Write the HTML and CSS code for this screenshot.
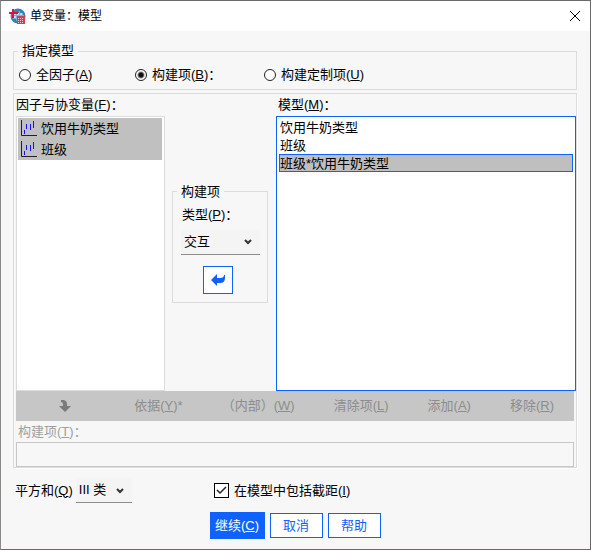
FILE: index.html
```html
<!DOCTYPE html>
<html lang="zh-CN">
  <head>
    <meta charset="utf-8">
    <title>单变量：模型</title>
    <link rel="stylesheet" href="styles.css">
  </head>
  <body>
    <div class="dialog">
      <header class="titlebar">
        <svg class="logo" width="17" height="17" viewBox="0 0 17 17">
          <circle cx="9" cy="8" r="7.500" fill="#3b7fb8"/>
          <path d="M5 5h9v6H4z" fill="#c5dcec"/>
          <path d="M4 7.500h11M4 10.500h11M7.500 4v9M10.500 3v11M13.500 5v5" stroke="#7fb0d3" fill="none"/>
          <path d="M3 1h2v3h4v2H5v4H3V6H0V4h3z" fill="#d8173a"/>
          <path d="M8 8h8v8H8z" fill="#d23c55"/>
          <path d="M9 10.500h6M9 12.500h6M9 14.500h6" stroke="#f6c9d0" stroke-dasharray="1 1"/>
        </svg>
        <h1>单变量：模型</h1>
        <button class="close" aria-label="关闭">
          <svg width="12" height="12" viewBox="0 0 12 12"><path d="M1 1l10 10M11 1L1 11" stroke="#000" fill="none"/></svg>
        </button>
      </header>

      <form class="content">
        <fieldset class="group specify">
          <legend>指定模型</legend>
          <div class="radios">
            <label><input type="radio" name="spec"><span>全因子(<u>A</u>)</span></label>
            <label><input type="radio" name="spec" checked><span>构建项(<u>B</u>)：</span></label>
            <label><input type="radio" name="spec"><span>构建定制项(<u>U</u>)</span></label>
          </div>
        </fieldset>

        <section class="group panel">
          <div class="lists">
            <div class="column">
              <span class="caption" id="factors">因子与协变量(<u>F</u>)：</span>
              <ul class="list factors" role="listbox" aria-labelledby="factors">
                <li role="option" aria-selected="true">
                  <svg width="17" height="17" viewBox="0 0 17 17"><path d="M1.500 0v15.500H17" stroke="#222" fill="none"/><path d="M4.500 10v4M6.500 4v5M10.500 4v6M13.500 1v7" stroke="#11f"/></svg>
                  饮用牛奶类型
                </li>
                <li role="option" aria-selected="true">
                  <svg width="17" height="17" viewBox="0 0 17 17"><path d="M1.500 0v15.500H17" stroke="#222" fill="none"/><path d="M4.500 10v4M6.500 4v5M10.500 4v6M13.500 1v7" stroke="#11f"/></svg>
                  班级
                </li>
              </ul>
            </div>

            <fieldset class="group build">
              <legend>构建项</legend>
              <label for="type">类型(<u>P</u>)：</label>
              <div class="dropdown">
                <select id="type"><option>交互</option></select>
                <svg width="8" height="6" viewBox="0 0 8 6"><path d="M1 1l3 3 3-3" stroke="#333" stroke-width="2" fill="none"/></svg>
              </div>
              <button type="button" class="move" aria-label="移回">
                <svg width="14" height="14" viewBox="0 0 14 14"><path d="M0 7l6-6v4h3q4 0 4-3h1v3q0 5-5 5H6v3z" fill="#0f62fe"/></svg>
              </button>
            </fieldset>

            <div class="column">
              <span class="caption" id="model">模型(<u>M</u>)：</span>
              <ul class="list model" role="listbox" aria-labelledby="model">
                <li role="option">饮用牛奶类型</li>
                <li role="option">班级</li>
                <li role="option" class="selected" aria-selected="true">班级*饮用牛奶类型</li>
              </ul>
            </div>
          </div>

          <div class="toolbar">
            <button type="button" disabled aria-label="下移">
              <svg width="12" height="12" viewBox="0 0 12 12"><path d="M2 0h3q3 1 3 4v2h4l-6 6-6-6h4V4q0-2-2-2z" fill="#7b7b7b"/></svg>
            </button>
            <button type="button" disabled>依据(<u>Y</u>)*</button>
            <button type="button" disabled>（内部）(<u>W</u>)</button>
            <button type="button" disabled>清除项(<u>L</u>)</button>
            <button type="button" disabled>添加(<u>A</u>)</button>
            <button type="button" disabled>移除(<u>R</u>)</button>
          </div>
          <label class="term-label" for="term">构建项(<u>T</u>)：</label>
          <input class="term" type="text" id="term" disabled>
        </section>

        <div class="options">
          <div class="squares">
            <label for="squares">平方和(<u>Q</u>)</label>
            <div class="dropdown">
              <select id="squares"><option>III 类</option></select>
              <svg width="8" height="6" viewBox="0 0 8 6"><path d="M1 1l3 3 3-3" stroke="#333" stroke-width="2" fill="none"/></svg>
            </div>
          </div>
          <label class="intercept"><input type="checkbox" checked><span>在模型中包括截距(<u>I</u>)</span></label>
        </div>

        <div class="actions">
          <button type="button" class="primary">继续(<u>C</u>)</button>
          <button type="button">取消</button>
          <button type="button">帮助</button>
        </div>
      </form>
    </div>
  </body>
</html>
```

FILE: styles.css
```css
* { box-sizing: border-box; }

body {
  margin: 0;
  font-family: "Liberation Sans", "Noto Sans CJK SC", sans-serif;
  font-size: 13px;
  line-height: 18px;
  color: #000;
}

button, input, select { font: inherit; color: inherit; margin: 0; }
svg { display: block; flex: none; }

.dialog { min-height: 100vh; border: 1px solid #6b6969; border-left-color: #8a8888; background: #f7f7f7; }

.titlebar { display: flex; align-items: center; height: 30px; padding: 0 9px 0 8px; background: #fff; }
.titlebar h1 { flex: 1; margin: 0 0 0 4px; font-size: 12px; font-weight: normal; }
.close { padding: 0; border: none; background: none; }

.content { padding: 11px 13px 10px 12px; }

.group { min-width: 0; margin: 0; border: 1px solid #dcdcdc; }
.group legend { padding: 0 4px; }

.specify { padding: 6px 5px 5px 4px; }
.specify legend { line-height: 18px; }
.radios { display: grid; grid-template-columns: 116px 129px 1fr; padding-left: 1px; }
.radios label { display: flex; align-items: center; gap: 5px; }
.radios input { appearance: none; width: 12px; height: 12px; border: 1px solid #222; border-radius: 50%; background: #fff; }
.radios input:checked { background: radial-gradient(circle, #111 2px, #fff 4px); }

.panel { margin-top: 3px; padding-left: 2px; box-shadow: 1px 1px #fff; }
.lists { display: grid; grid-template-columns: 149px 96px 1fr; align-items: center; column-gap: 7px; }
.lists .column:last-child { margin-left: 1px; }
.caption { display: block; line-height: 22px; }
.column:last-child .caption { padding-left: 2px; }
.list { height: 275px; margin: 0; padding: 1px 2px; list-style: none; background: #fff; border: 1px solid #dcdcdc; }

.factors { padding: 1px 2px 1px 1px; }
.factors li { display: flex; align-items: center; gap: 4px; height: 21px; padding-left: 2px; background: #c0c0c0; }

.model { border-color: #0f62fe; }
.model li { height: 18px; line-height: 17px; border: 1px solid transparent; }
.model .selected { background: #bfbfbf; border-color: #0f62fe; }

.build { display: flex; flex-direction: column; padding: 5px 7px 8px 8px; }
.build legend { margin-left: -4px; }
.build label { padding-left: 1px; }
.build .dropdown { margin-top: 6px; }

.dropdown { display: grid; align-items: center; }
.dropdown select { grid-area: 1 / 1; appearance: none; width: 100%; height: 25px; padding: 0 24px 0 3px; border: none; border-bottom: 1px solid #8d8d8d; border-radius: 0; background: #f4f4f4; }
.dropdown svg { grid-area: 1 / 1; justify-self: end; margin-right: 8px; pointer-events: none; }

.move { display: flex; align-items: center; justify-content: center; width: 30px; height: 28px; margin: 11px 5px 0 0; align-self: center; padding: 0; border: 1px solid #0f62fe; background: #fff; }

.toolbar { display: flex; height: 30px; margin-right: 2px; background: #c6c6c6; }
.toolbar button { padding: 0 20px 0 19px; border: none; background: none; color: #8d8d8d; white-space: nowrap; }
.toolbar button:first-child { display: flex; flex: 1; align-items: center; justify-content: center; }

.term-label { display: block; padding-left: 2px; line-height: 21px; color: #a0a0a0; }
.term { display: block; width: calc(100% - 2px); height: 25px; border: 1px solid #c6c6c6; background: #f7f7f7; }

.options { display: grid; grid-template-columns: 199px 1fr; align-items: center; margin-top: 10px; padding-left: 2px; }
.squares { display: flex; align-items: center; gap: 3px; }
.squares .dropdown { width: 56px; }
.intercept { display: flex; align-items: center; gap: 5px; }
.intercept input { appearance: none; width: 15px; height: 15px; border: 1px solid #000; background: #fff url("data:image/svg+xml,%3Csvg xmlns='http://www.w3.org/2000/svg' viewBox='0 0 13 13'%3E%3Cpath d='M2 6l3 3 6-6' fill='none' stroke='%23222' stroke-width='1.500'/%3E%3C/svg%3E"); }

.actions { display: flex; justify-content: center; align-items: center; gap: 5px; margin-top: 9px; }
.actions button { width: 53px; height: 25px; padding: 0; border: 1px solid #0f62fe; background: #fff; color: #0f62fe; }
.actions .primary { width: 55px; height: 27px; background: #0f62fe; color: #fff; }
```
